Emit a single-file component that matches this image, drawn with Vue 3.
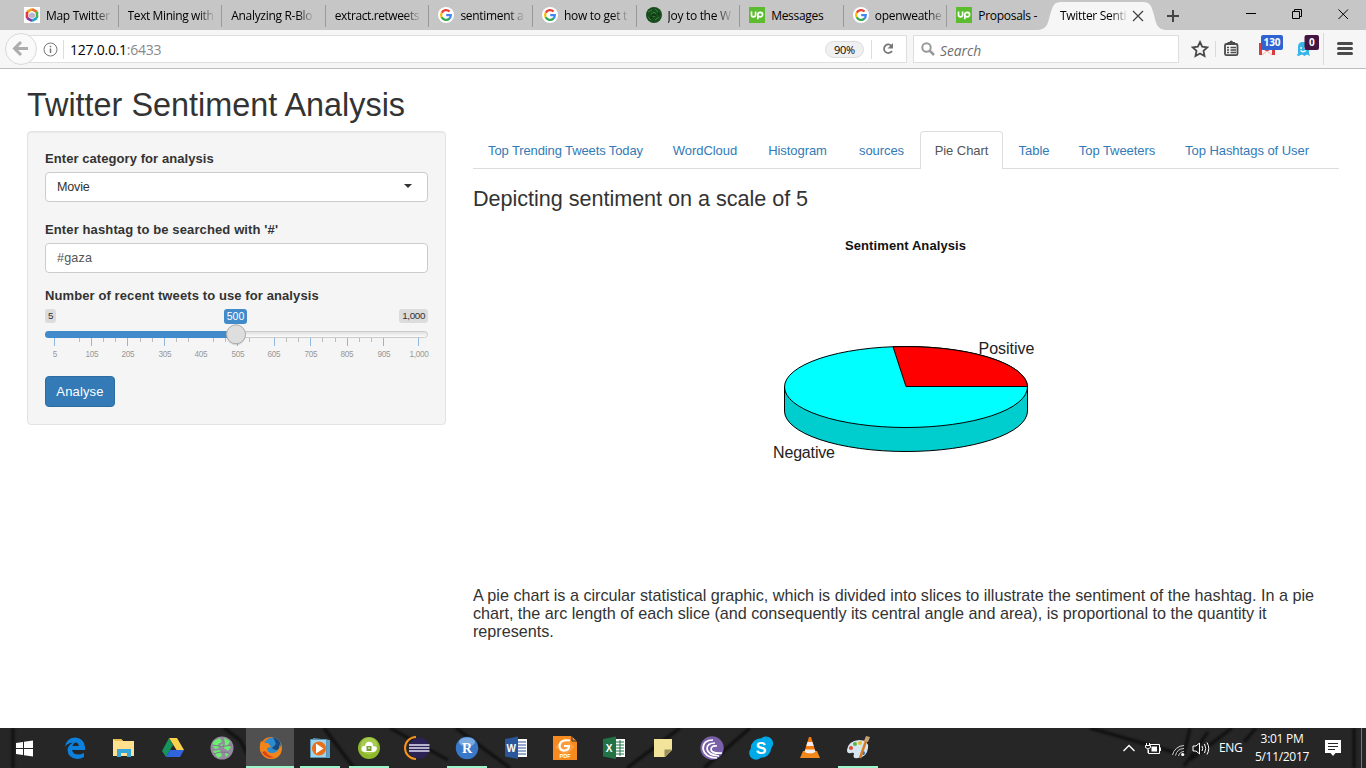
<script setup>
const tabs = [
  { t: 'Map Twitter', i: 'hex' }, { t: 'Text Mining with' }, { t: 'Analyzing R-Blo' }, { t: 'extract.retweets' },
  { t: 'sentiment a', i: 'g' }, { t: 'how to get t', i: 'g' }, { t: 'Joy to the W', i: 'joy' }, { t: 'Messages', i: 'up' },
  { t: 'openweathe', i: 'g' }, { t: 'Proposals -', i: 'up' },
]
const nav = [
  ['Top Trending Tweets Today', 185], ['WordCloud', 94], ['Histogram', 91], ['sources', 77],
  ['Pie Chart', 83], ['Table', 62], ['Top Tweeters', 104], ['Top Hashtags of User', 156],
]
const major = [9.5, 46.5, 82.5, 119.5, 192.5, 229.5, 265.5, 302.5, 338.5, 373.5]
const minor = [34.5, 58.5, 70.5, 95.5, 107.5, 131.5, 143.5, 168.5, 180.5, 204.5, 241.5, 253.5, 277.5, 290.5, 314.5, 326.5]
const scale = [[10, '5'], [47, '105'], [83, '205'], [120, '305'], [156, '405'], [193, '505'], [229, '605'], [266, '705'], [302, '805'], [339, '905'], [374, '1,000']]
const apps = ['edge', 'folder', 'drive', 'globe', 'firefox', 'media', 'cloud', 'eclipse', 'r', 'word', 'foxit', 'excel', 'note', 'bit', 'skype', 'vlc', 'paint']
const open = ['media', 'cloud', 'r', 'paint']
</script>

<template>
  <div class="screen">
    <div class="strip">
      <div v-for="t in tabs" :key="t.t" class="tab">
        <svg v-if="t.i" class="fav" width="16" height="16" viewBox="0 0 16 16">
          <g v-if="t.i === 'g'">
            <circle cx="8" cy="8" r="8" fill="#fff" />
            <g fill="none" stroke-width="2.2">
              <path d="M11.6 4.6A4.9 4.9 0 0 0 3.7 5.8" stroke="#ea4335" />
              <path d="M3.7 5.7A5 5 0 0 0 3.7 10.5" stroke="#fbbc05" />
              <path d="M3.7 10.3A4.9 4.9 0 0 0 11.4 11.6" stroke="#34a853" />
              <path d="M8.2 8.2H12.8A4.8 4.8 0 0 1 11.3 11.6" stroke="#4285f4" />
            </g>
          </g>
          <g v-else-if="t.i === 'up'">
            <path d="M0 0H16V16H0Z" fill="#5bbc2e" />
            <path d="M2.500 4.500V7.700Q2.500 9.800 4.500 9.800T6.600 7.700V4.500M8.800 12.300V7.500Q9 5.300 11.300 5.300Q13.600 5.400 13.600 7.500Q13.400 9.800 11.200 9.800Q9.500 9.800 8.900 8.600" fill="none" stroke="#fff" stroke-width="1.700" />
          </g>
          <g v-else-if="t.i === 'joy'">
            <circle cx="8" cy="8" r="8" fill="#174d1c" />
            <path d="M2 5L6 3M9 2L12 5M2 10L5 13M9 13L13 10M5 7L8 5L10 7M6 10L9 9" stroke="#3b7f3a" fill="none" />
            <path d="M6 8H10M4 11L7 10M12 7H14" stroke="#0b2a10" />
          </g>
          <g v-else>
            <path d="M0 0H16V16H0Z" fill="#fff" />
            <path d="M8 5.200L11 7V10L8 11.500L5 10V7Z" fill="#b9b6ca" />
            <g fill="none" stroke-width="2.600">
              <path d="M3 5L8 2.200" stroke="#f0a51e" /><path d="M8 2.200L13 5" stroke="#e8702a" />
              <path d="M13 4.600V11" stroke="#46b348" /><path d="M13 11L8 13.800" stroke="#24a6c9" />
              <path d="M8 13.800L3 11" stroke="#7b3fb0" /><path d="M3 11.300V4.800" stroke="#dc3545" />
            </g>
          </g>
        </svg>
        <span class="tt" :class="{ whole: t.t === 'Messages' || t.t === 'Proposals -' }">{{ t.t }}</span>
      </div>
      <div class="active-tab">
        <svg class="shape" width="134" height="30"><path d="M0 30C12 30 12 22 14 15C17 5 18 2 25 2H107C114 2 115 5 118 15C120 22 120 30 132 30Z" fill="#f6f6f6" /></svg>
        <span class="tt">Twitter Senti</span>
        <svg class="x" width="12" height="12"><path d="M1 1L11 11M11 1L1 11" stroke="#444" stroke-width="1.300" /></svg>
      </div>
      <svg class="winctl" width="196" height="30" fill="none" stroke="#000">
        <path d="M-3 16H9M3 10V22" stroke="#444" stroke-width="2" />
        <path d="M76 13.500H86" /><path d="M122.500 11.500H129.500V18.500H122.500ZM124.500 11.500V9.500H131.500V16.500H129.500" />
        <path d="M168.500 9.500L178 19M178 9.500L168.500 19" />
      </svg>
    </div>

    <div class="toolbar">
      <div class="url">
        <svg class="back" width="34" height="34"><circle cx="17" cy="17" r="15.500" fill="#fafafa" stroke="#d9d9d9" /><path d="M17 10L10.500 16.500L17 23M11 16.500H24" stroke="#adadad" stroke-width="3" fill="none" /></svg>
        <svg class="info" width="15" height="15"><circle cx="7.500" cy="7.500" r="6.500" fill="none" stroke="#777" /><path d="M7.500 6.500V11M7.500 3.700V5.200" stroke="#777" stroke-width="1.500" /></svg>
        <i class="vl"></i>
        <span class="addr">127.0.0.1<b>:6433</b></span>
        <span class="pill">90%</span>
        <i class="vl"></i>
        <svg class="reload" width="14" height="14"><path d="M10.800 4.200A4.300 4.300 0 1 0 11 9" fill="none" stroke="#777" stroke-width="1.800" /><path d="M12 1V6.500H6.500Z" fill="#777" /></svg>
      </div>
      <div class="search">
        <svg width="15" height="15"><circle cx="5.500" cy="5.500" r="4.200" fill="none" stroke="#999" stroke-width="2" /><path d="M8.500 8.500L13 13" stroke="#999" stroke-width="2.500" /></svg>
        <span>Search</span>
      </div>
      <svg class="tools" width="187" height="38" viewBox="1179 30 187 38">
        <path d="M1200 42L1202.200 46.700L1207.300 47.400L1203.500 50.900L1204.500 56L1200 53.500L1195.500 56L1196.500 50.900L1192.700 47.400L1197.800 46.700Z" fill="none" stroke="#4a4a4a" stroke-width="1.800" />
        <path d="M1215.500 41V57M1323.500 33V65" stroke="#dadada" />
        <path d="M1227.500 44V42H1229.500Q1230 40.500 1231.200 40.500T1233 42H1235V44Z" fill="#4a4a4a" />
        <rect x="1225" y="44" width="12.500" height="11.200" rx="1.500" fill="none" stroke="#4a4a4a" stroke-width="1.800" />
        <path d="M1227 47.500H1229M1230.500 47.500H1236M1227 50H1229M1230.500 50H1236M1227 52.500H1229M1230.500 52.500H1236" stroke="#4a4a4a" stroke-width="1.300" />
        <path d="M1260 43H1274V55H1260Z" fill="#fff3f1" /><path d="M1259 43V55H1262V48L1267 52L1272 48V55H1275V43" fill="#da3b3b" /><path d="M1262 55L1267 51L1272 55" fill="#fff3f1" stroke="#f0b5b0" />
        <path d="M1298 54V47Q1298 42 1303 42T1309 47V53L1310 56L1307 54.500L1304.500 56L1302 54.500L1298.500 56L1296.500 55Z" fill="#37b4e8" /><path d="M1301 47V49M1305 47V49M1300.500 50.500Q1303 53 1306 50.500" stroke="#fff" fill="none" stroke-width="1.300" />
        <rect x="1261" y="35" width="22" height="15" rx="2" fill="#2f63d2" /><rect x="1304.500" y="35" width="14.500" height="15" rx="2" fill="#441540" />
        <text x="1272" y="46" class="bdg">130</text><text x="1311.800" y="46" class="bdg">0</text>
        <path d="M1338.500 43.500H1351.500M1338.500 48.500H1351.500M1338.500 53.500H1351.500" stroke="#4a4a4a" stroke-width="3" stroke-linecap="round" />
      </svg>
    </div>

    <main>
      <h1>Twitter Sentiment Analysis</h1>
      <div class="cols">
        <aside>
          <label>Enter category for analysis</label>
          <div class="field sel"><span>Movie</span><i></i></div>
          <label class="l2">Enter hashtag to be searched with '#'</label>
          <div class="field inp">#gaza</div>
          <label class="l3">Number of recent tweets to use for analysis</label>
          <div class="vals"><span>5</span><span class="cur">500</span><span>1,000</span></div>
          <svg class="slider" width="384" height="36">
            <defs><linearGradient id="bar" x2="0" y2="1"><stop offset="0" stop-color="#ddd" /><stop offset="1" stop-color="#fff" /></linearGradient></defs>
            <rect x="0.500" y="5.500" width="382" height="6" rx="3" fill="url(#bar)" stroke="#ccc" />
            <path d="M190 5H3.500A3.500 3.500 0 0 0 3.500 12H190Z" fill="#428bca" />
            <path v-for="x in minor" :key="x" :d="`M${x} 12V16`" stroke="#bbb" />
            <path v-for="x in major" :key="x" :d="`M${x} 12V20`" stroke="#8fb8db" />
            <text v-for="s in scale" :key="s[1]" :x="s[0]" y="31" class="tick">{{ s[1] }}</text>
            <circle cx="191" cy="9.500" r="10" fill="#000" opacity=".09" />
            <circle cx="191" cy="8.300" r="9.500" fill="#dedede" stroke="#aaa" />
          </svg>
          <button>Analyse</button>
        </aside>
        <section>
          <nav><a v-for="n in nav" :key="n[0]" :class="{ on: n[0] === 'Pie Chart' }" :style="{ width: n[1] + 'px' }">{{ n[0] }}</a></nav>
          <h3>Depicting sentiment on a scale of 5</h3>
          <svg class="pie" width="866" height="360" viewBox="473 220 866 360">
            <text x="845" y="250" textLength="121" class="pt">Sentiment Analysis</text>
            <g stroke="#000">
              <path d="M784.500 387V411A121.500 40.500 0 0 0 1027.500 411V387Z" fill="#00cdcd" />
              <ellipse cx="906" cy="387" rx="121.500" ry="40.500" fill="#0ff" />
              <path d="M906 386.500L893 346.800A121.500 40.500 0 0 1 1027.500 386.500Z" fill="red" />
            </g>
            <text x="978.500" y="354" textLength="56" class="pl">Positive</text>
            <text x="773" y="458" textLength="62" class="pl">Negative</text>
          </svg>
          <p>A pie chart is a circular statistical graphic, which is divided into slices to illustrate the sentiment of the hashtag. In a pie<br>chart, the arc length of each slice (and consequently its central angle and area), is proportional to the quantity it<br>represents.</p>
        </section>
      </div>
    </main>

    <footer>
      <svg class="streaks" width="1366" height="40" fill="none" stroke="#080808" stroke-width="3">
        <path d="M13 0V40M224 0L240 12L253 37M324 0L354 40M390 0L448 32M456 0L510 40M627 40L680 0M704 40L750 0M1090 0L1180 26M1190 0L1184 26M1208 4L1184 38M1232 0L1190 32M1256 0L1244 14M1354 0V40" />
      </svg>
      <div class="start"><svg width="17" height="17"><path d="M0 3L7 2V8H0ZM8 1.800L17 .5V8H8ZM0 9H7V15L0 14ZM8 9H17V16.500L8 15.200Z" fill="#fff" /></svg></div>
      <div v-for="a in apps" :key="a" class="app" :class="{ cur: a === 'firefox', open: open.includes(a) }">
        <svg width="24" height="24" viewBox="0 0 24 24">
          <g v-if="a === 'edge'"><path d="M2 11Q3 2 12 1.500Q21 2 22 11V14H9Q10 18.500 15 18.500Q18 18.500 21 17V21Q18 23 14 23Q5 22 4.500 14Q5 9 10 6.500Q4 7 2 11ZM9.500 10H15.800Q15.500 6.500 12.500 6.500Q10 7 9.500 10Z" fill="#0c80dd" /></g>
          <g v-else-if="a === 'folder'"><path d="M1 3H9L11 5H22V20H1Z" fill="#ffe08e" /><path d="M1 3H9L11 5H3Z" fill="#e8bd4c" /><path d="M5 21V13H19V21H15V17H9V21Z" fill="#35a5dd" /></g>
          <g v-else-if="a === 'drive'"><path d="M8 2H16L23 14H15.500Z" fill="#fcd14c" /><path d="M8 2L1 15L5 21L12 9Z" fill="#16945b" /><path d="M9 14H23L19 21H5Z" fill="#3165df" /></g>
          <g v-else-if="a === 'globe'"><circle cx="12" cy="12" r="11.500" fill="#978aa0" /><path d="M4 5L10 2L12 6L8 8L9 12L5 13L2 9ZM14 2L20 5L18 9L21 11L18 15L14 12L15 7ZM3 15L10 14L12 20L8 22ZM15 17L20 17L16 21ZM10 9L13 8L12 12Z" fill="#69f06e" /><path d="M2 9Q12 12 22 9M4 18Q12 14 20 18" stroke="#8a6f96" fill="none" /></g>
          <g v-else-if="a === 'firefox'"><circle cx="12" cy="12" r="11" fill="#ed7a16" /><circle cx="13.500" cy="10" r="8.500" fill="#2c8ccf" /><path d="M14 1Q22 3 22 12Q17 16 13 12L17 8Z" fill="#174c82" /><path d="M2 5L5 7L9 7L12 11L8 12Q8 17 13 17Q20 17 21 8Q25 18 17 22Q9 25 3 18Q-1 12 2 5Z" fill="#f0861b" /><path d="M3 16Q8 24 17 21Q11 22 6 15Z" fill="#db421a" /></g>
          <g v-else-if="a === 'media'"><path d="M5 2L22 4V22L7 22Z" fill="#5d9fc8" /><path d="M2.500 3.500H18.500V21.500H2.500Z" fill="#9ed3ec" stroke="#5794b7" /><circle cx="11" cy="12.500" r="7" fill="#e96f19" /><path d="M8 7.500L15.500 12.500L8 17.500Z" fill="#fff" /></g>
          <g v-else-if="a === 'cloud'"><circle cx="12" cy="12" r="11" fill="#8eb92b" /><circle cx="12" cy="10" r="8.500" fill="#a6cb4f" /><path d="M7 16Q3 15 5 11Q6 9 8 10Q9 5 13 6Q16 6 16 10Q20 10 20 13Q19 16 17 16Z" fill="#fff" /><path d="M9.500 10H14.500V15H9.500Z" fill="#779f31" /><path d="M11 12H13" stroke="#fff" /></g>
          <g v-else-if="a === 'eclipse'"><path d="M10 1A11 11 0 0 0 10 23" stroke="#f7941d" stroke-width="2" fill="none" /><circle cx="13" cy="12" r="10.500" fill="#2c2255" /><path d="M3 9H23.500M3 12H23.500M3 15H23.500" stroke="#e2e0f4" stroke-width="1.700" /></g>
          <g v-else-if="a === 'r'"><circle cx="12" cy="12" r="11.200" fill="#3978c8" /><ellipse cx="12" cy="6" rx="8" ry="4.500" fill="#9dc4e9" opacity=".65" /><text x="12" y="17" class="ltr serif">R</text></g>
          <g v-else-if="a === 'word'"><path d="M12 3H23V21H12Z" fill="#fff" /><path d="M14 6H22M14 9H22M14 12H22M14 15H22M14 18H22" stroke="#2b579a" /><path d="M1 3L14 .5V23L1 20.500Z" fill="#2b579a" /><text x="7.200" y="16" class="ltr">W</text></g>
          <g v-else-if="a === 'foxit'"><path d="M0 0H18L24 6V24H0Z" fill="#f58a1f" /><path d="M12 2L22 11L12 20L2 11Z" fill="#fb9d3c" /><path d="M19 0L24 5H19Z" fill="#ef8b2a" stroke="#333" /><path d="M17 4.500Q7 3 6.500 10Q7 15 12 14.500Q16 14 16 10H11" fill="none" stroke="#fff" stroke-width="2.200" /><text x="12" y="22" class="pdf">PDF</text></g>
          <g v-else-if="a === 'excel'"><path d="M12 3H23V21H12Z" fill="#fff" /><path d="M14 6H22M14 9H22M14 12H22M14 15H22M14 18H22M18 4V20" stroke="#217346" /><path d="M1 3L14 .5V23L1 20.500Z" fill="#217346" /><text x="7.200" y="16" class="ltr">X</text></g>
          <g v-else-if="a === 'note'"><path d="M3 3H21V14L14 21H3Z" fill="#f2e49a" /><path d="M13.500 13.500H21L13.500 21Z" fill="#988f59" /></g>
          <g v-else-if="a === 'bit'"><circle cx="12" cy="12" r="11.700" fill="#7a60a8" /><path d="M13 4Q3 4 3 13Q5 22 17 22M15 7Q7 7 7 13Q8 19 19 20M17 10Q11 9 11 14Q13 18 22 17" stroke="#fff" fill="none" stroke-width="1.700" /></g>
          <g v-else-if="a === 'skype'"><path d="M2.500 13A9.500 9.500 0 0 1 12.500 3A5.500 5.500 0 0 1 21.500 12A9.500 9.500 0 0 1 11.500 21A5.500 5.500 0 0 1 2.500 13Z" fill="#00a9e8" stroke="#00a9e8" stroke-width="1.500" /><text x="12" y="17.800" class="ltr sk">S</text></g>
          <g v-else-if="a === 'vlc'"><path d="M5 15H19L22 22H2Z" fill="#f08a1c" /><path d="M11 1H13L18 17Q12 21 6 17Z" fill="#f47b0c" /><path d="M9.500 6H14.500L15.700 10H8.300ZM7.300 13.500H16.700L17.500 16Q12 19 6.500 16Z" fill="#eee" /></g>
          <g v-else><path d="M1 14Q2 5 13 4Q23 4 22 12Q21 21 12 22Q6 23 8 18Q8 16 5 17Q1 18 1 14Z" fill="#d5e6f0" /><circle cx="5" cy="12" r="2" fill="#e54b32" /><circle cx="9" cy="8" r="2" fill="#59b447" /><circle cx="14" cy="7" r="2" fill="#e8bb2d" /><circle cx="17" cy="17" r="2" fill="#3271bd" /><path d="M14 22L20 5" stroke="#d87c24" stroke-width="2.500" /><path d="M18 5L20 0L24 1L22 6Z" fill="#c4a273" /></g>
        </svg>
      </div>
      <div class="tray">
        <svg width="90" height="24" viewBox="1122 735 90 24" fill="none" stroke="#fff">
          <path d="M1123.500 750L1129 744.500L1134.500 750" stroke-width="1.400" />
          <path d="M1150 743.500H1159.500V752.500H1148.500V749M1160.500 746.500V750" /><path d="M1151.500 745.500H1157V750.500H1151.500Z" fill="#fff" stroke="none" /><path d="M1145.500 744.500H1150.500V746.500Q1148 749.500 1145.500 746.500ZM1146.500 744V742M1149.500 744V742M1148 748V752" />
          <path d="M1172.500 754A12 12 0 0 1 1184 744.500M1175.500 754.500A9 9 0 0 1 1184 747.500M1178.500 755A6 6 0 0 1 1184 750.500" stroke="#ccc" /><circle cx="1182.700" cy="753.500" r="1.600" fill="#fff" stroke="none" />
          <path d="M1193 745H1196L1199.500 742V753L1196 750H1193ZM1202 745Q1203.500 747.500 1202 750M1204.500 743Q1207 747.500 1204.500 752M1207 741.500Q1210.500 747.500 1207 753.500" />
        </svg>
        <span class="eng">ENG</span>
        <div class="clock"><span>3:01 PM</span><span>5/11/2017</span></div>
        <svg class="note" width="16" height="17"><path d="M0 0H16V13H10.500L8 16L5.500 13H0Z" fill="#fff" /><path d="M3 3.500H13M3 6.500H13M3 9.500H10" stroke="#262626" /></svg>
        <i class="edge"></i>
      </div>
    </footer>
  </div>
</template>

<style>
body { margin: 0; overflow: hidden; background: #fff; }
</style>
<style scoped>
* { box-sizing: border-box; }
svg { display: block; flex: none; overflow: visible; }
.screen { width: 1366px; height: 768px; display: flex; flex-direction: column; font-family: "Liberation Sans", Arial, sans-serif; color: #333; background: #fff; overflow: hidden; }
.strip { height: 30px; background: #c6c6c6; display: flex; padding-left: 15px; font: 12px/30px "Open Sans", sans-serif; color: #000; letter-spacing: -.3px; }
.tab { width: 103.600px; height: 30px; display: flex; align-items: center; padding: 0 3px 0 9px; position: relative; flex: none; }
.tab::after { content: ''; position: absolute; right: 0; top: 5px; height: 22px; width: 1px; background: #999; }
.tab:nth-child(10)::after { display: none; }
.fav { margin-right: 6px; }
.tt { white-space: nowrap; height: 30px; line-height: 31px; -webkit-mask-image: linear-gradient(90deg, #000 calc(100% - 15px), rgba(0, 0, 0, .15)); mask-image: linear-gradient(90deg, #000 calc(100% - 15px), rgba(0, 0, 0, .15)); }
.tt.whole { -webkit-mask-image: none; mask-image: none; }
.tab:nth-child(2), .tab:nth-child(4) { letter-spacing: -.4px; }
.active-tab { width: 119px; padding-left: 9px; display: flex; align-items: center; position: relative; flex: none; }
.active-tab .shape { position: absolute; left: -15px; top: 0; }
.active-tab .tt { position: relative; flex: 0 0 66px; }
.active-tab .x { position: relative; margin: 2px 0 0 6px; }
.winctl { margin-left: auto; }
.toolbar { height: 39px; background: #f6f6f6; border-bottom: 1px solid #bdbdbd; display: flex; align-items: center; flex: none; }
.url { margin-left: 21px; width: 886px; height: 28px; background: #fff; border: 1px solid #dedede; display: flex; align-items: center; flex: none; }
.back { margin-left: -18px; }
.info { margin-left: 5px; }
.vl { width: 1px; height: 19px; background: #ddd; margin-left: 5px; }
.addr { font: 14px "Open Sans", sans-serif; letter-spacing: -.25px; color: #000; margin-left: 6px; flex: 1; }
.addr b { font-weight: 400; color: #888; }
.pill { width: 39px; height: 17px; border: 1px solid #ddd; border-radius: 9px; background: #f0f0f0; text-align: center; font: 11px/15px "Open Sans", sans-serif; letter-spacing: -.3px; color: #000; margin-right: 2px; }
.reload { margin: 0 11px 0 9px; }
.search { margin-left: 6px; width: 266px; height: 28px; background: #fff; border: 1px solid #dedede; display: flex; align-items: center; padding-left: 7px; font: italic 13.800px "Open Sans", sans-serif; color: #6e6e6e; gap: 4px; }
.search span { padding-top: 2px; }
.bdg { font: bold 10px "Open Sans", sans-serif; fill: #fff; text-anchor: middle; }
main { flex: 1; padding: 0 27px; }
h1 { margin: 18px 0 0; height: 44px; font-size: 32.400px; line-height: 36px; font-weight: 400; white-space: nowrap; }
.cols { display: flex; gap: 27px; }
aside { width: 419px; height: 294px; background: #f5f5f5; border: 1px solid #e3e3e3; border-radius: 4px; padding: 18px 17px; box-shadow: inset 0 1px 1px rgba(0, 0, 0, .05); }
label { display: block; font-size: 13px; line-height: 18px; font-weight: 700; white-space: nowrap; letter-spacing: .07px; }
.field { width: 383px; height: 30px; background: #fff; border: 1px solid #ccc; border-radius: 4px; padding: 0 11px; font-size: 12.600px; line-height: 28px; }
.sel { margin-top: 4px; display: flex; justify-content: space-between; align-items: center; }
.sel span { letter-spacing: -.2px; }
.sel i { border: 4px solid transparent; border-top-color: #333; border-bottom: 0; margin: -3px 4px 0 0; }
.inp { color: #555; margin-top: 4px; letter-spacing: .15px; }
.l2 { margin-top: 19px; letter-spacing: .12px; }
.l3 { margin-top: 14px; letter-spacing: .1px; }
.vals { display: flex; justify-content: space-between; height: 17px; margin-top: 4px; width: 383px; font-size: 9.800px; line-height: 14px; letter-spacing: -.35px; position: relative; }
.vals span { background: #dcdcdc; border-radius: 3px; padding: 0 3px; height: 14px; }
.vals .cur { position: absolute; left: 179px; width: 23px; height: 15px; background: #428bca; color: #fff; text-align: center; font-size: 10.500px; letter-spacing: 0; padding: 0; }
.tick { font-size: 8.200px; letter-spacing: -.3px; fill: #999; text-anchor: middle; }
button { margin-top: 14px; width: 70px; height: 31px; padding: 0; border: 1px solid #2e6da4; border-radius: 4px; background: #337ab7; color: #fff; font: 13px "Liberation Sans", sans-serif; letter-spacing: .15px; display: block; }
section { width: 866px; }
nav { height: 38px; border-bottom: 1px solid #ddd; display: flex; font-size: 13px; letter-spacing: -.06px; }
nav a { height: 38px; line-height: 39px; text-align: center; color: #337ab7; white-space: nowrap; flex: none; }
nav a:first-child { letter-spacing: -.12px; }
nav .on { color: #555; background: #fff; border: 1px solid #ddd; border-bottom: 0; border-radius: 4px 4px 0 0; line-height: 37px; }
h3 { margin: 18px 0 0; height: 33px; font-size: 21.600px; line-height: 24px; font-weight: 400; white-space: nowrap; letter-spacing: -.03px; }
.pie { height: 360px; }
.pt { font-size: 13px; font-weight: 700; fill: #111; }
.pl { font-size: 16px; fill: #222; }
p { margin: 6px 0 0; font-size: 16.200px; line-height: 18px; white-space: nowrap; letter-spacing: -.016px; }
footer { height: 40px; flex: none; background: #262626; display: flex; position: relative; overflow: hidden; }
.streaks { position: absolute; left: 0; top: 0; filter: blur(1px); opacity: .75; }
.start { width: 50.500px; height: 40px; display: flex; align-items: center; padding-left: 16px; position: relative; }
.app { width: 48.970px; height: 40px; display: flex; justify-content: center; align-items: center; position: relative; flex: none; }
.cur.app { background: linear-gradient(#505050, #505050) no-repeat 0 0 / 48px 38px; }
.app.cur::after, .app.open::after { content: ''; position: absolute; bottom: 0; left: 4.300px; width: 40px; height: 2px; background: #9ff5cb; }
.app.cur::after { left: 0; width: 48px; }
.ltr { font: bold 10px "Liberation Sans", sans-serif; fill: #fff; text-anchor: middle; }
.ltr.serif { font: bold 14px "Liberation Serif", serif; }
.ltr.sk { font-size: 16px; }
.pdf { font: bold 5.500px "Liberation Sans", sans-serif; fill: #fff; text-anchor: middle; }
.tray { margin-left: auto; width: 244px; flex: none; display: flex; align-items: center; color: #fff; font: 12px "Open Sans", sans-serif; letter-spacing: -.3px; position: relative; }
.eng { width: 24px; margin-left: 7px; font-size: 12px; margin-top: -1px; }
.clock { width: 60px; margin-left: 9px; display: flex; flex-direction: column; text-align: center; line-height: 18px; }
.note { margin-left: 13px; margin-top: 1px; }
.edge { width: 1px; height: 40px; background: #777; margin-left: auto; margin-right: 4px; }
</style>
